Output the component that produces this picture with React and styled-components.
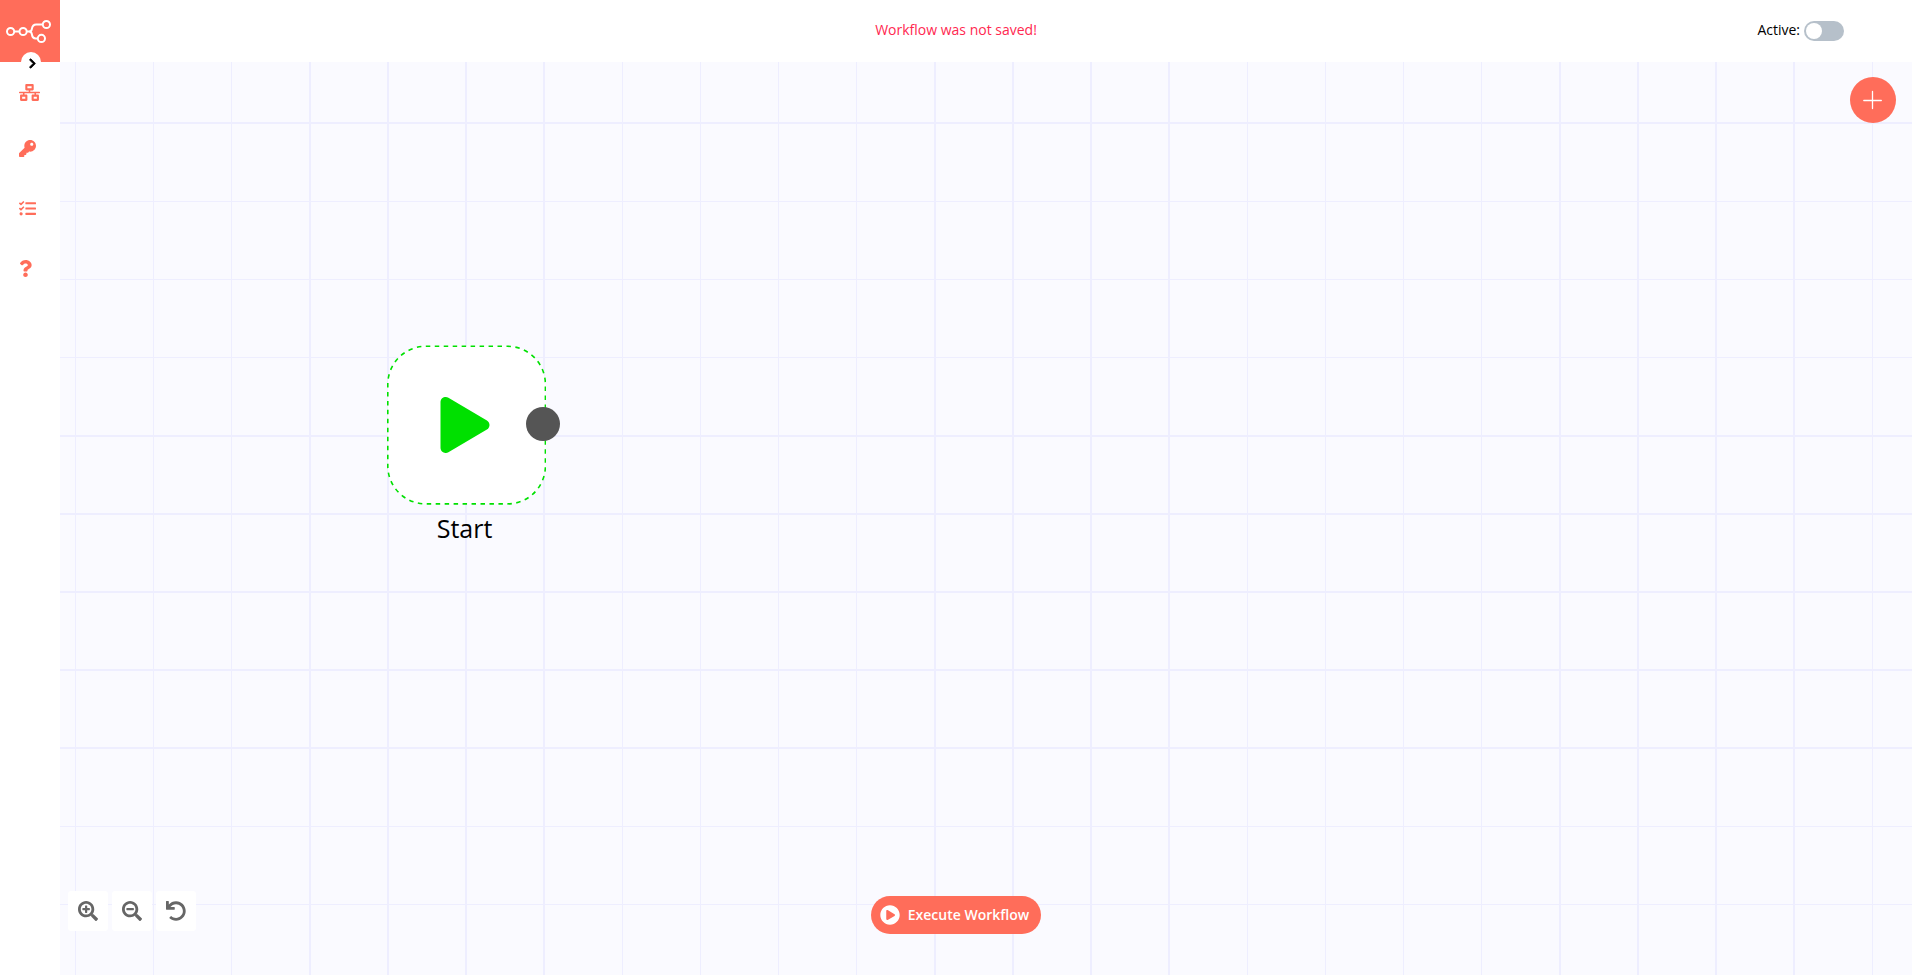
import React from "react";
import styled, { createGlobalStyle } from "styled-components";
import {
  FaNetworkWired,
  FaKey,
  FaTasks,
  FaQuestion,
  FaSearchPlus,
  FaSearchMinus,
  FaUndo,
  FaPlay,
  FaPlayCircle,
  FaChevronRight,
} from "react-icons/fa";

const brand = "#ff6d5a";

// One repeat of the canvas grid: eight lines over 625px, as [start, thickness].
const columns = [[0, 2], [78, 2], [156, 2], [234, 2], [313, 1], [391, 1], [469, 1], [547, 1]];
const rows = [[0, 2], [79, 1], [157, 1], [235, 1], [313, 2], [391, 2], [469, 2], [547, 2]];

const gridLines = (direction, lines) =>
  `linear-gradient(${direction}, ${lines
    .map(([at, size]) => `transparent ${at}px, #eeeeff ${at}px ${at + size}px, transparent ${at + size}px`)
    .join(", ")})`;

const GlobalStyle = createGlobalStyle`
  *, *::before, *::after { box-sizing: border-box; }
  body {
    margin: 0;
    background: #fff;
    color: #000;
    font: 14px/20px "Open Sans", "Noto Sans", sans-serif;
  }
  button { font: inherit; border: 0; padding: 0; cursor: pointer; }
  svg { display: block; }
`;

const Page = styled.div`
  display: grid;
  grid-template-columns: 60px 1fr;
  min-height: 100vh;
`;

const Sidebar = styled.aside`
  position: relative;
  background: #fff;
`;

const LogoLink = styled.a`
  display: flex;
  align-items: center;
  justify-content: center;
  height: 62px;
  background: ${brand};
`;

const ExpandButton = styled.button`
  position: absolute;
  top: 52px;
  left: 21px;
  display: grid;
  place-items: center;
  width: 20px;
  height: 20px;
  border-radius: 50%;
  background: #fff;
  color: #000;
  && { padding: 2px 0 0 2px; }
  svg { stroke: currentColor; stroke-width: 36; overflow: visible; }
`;

const Menu = styled.nav`
  display: flex;
  flex-direction: column;
  padding-top: 2px;
`;

const MenuItem = styled.a`
  display: flex;
  align-items: center;
  height: 56px;
  padding-left: 19px;
  color: ${brand};
  margin-top: ${({ $spaced }) => ($spaced ? "4px" : "0")};
  svg {
    width: ${({ $iconWidth }) => $iconWidth}px;
    height: 17px;
  }
`;

const Main = styled.div`
  display: flex;
  flex-direction: column;
  min-width: 0;
`;

const Header = styled.header`
  display: grid;
  grid-template-columns: 1fr auto 1fr;
  align-items: center;
  height: 62px;
  padding: 0 68px 2px 8px;
  background: #fff;
`;

const SaveStatus = styled.span`
  grid-column: 2;
  color: #ff2850;
`;

const ActiveLabel = styled.label`
  display: flex;
  align-items: center;
  justify-self: end;
  gap: 4px;
`;

const Switch = styled.input`
  appearance: none;
  width: 40px;
  height: 20px;
  margin: 2px 0 0;
  padding: 2px;
  border-radius: 10px;
  background: #b6c0ca;
  &::before {
    content: "";
    display: block;
    width: 16px;
    height: 16px;
    border-radius: 50%;
    background: #fff;
  }
  &:checked { background: ${brand}; }
  &:checked::before { margin-left: 20px; }
`;

const Canvas = styled.main`
  position: relative;
  flex: 1;
  display: flex;
  flex-direction: column;
  justify-content: space-between;
  overflow: hidden;
  background-color: #fafaff;
  background-image: ${gridLines("to right", columns)}, ${gridLines("to bottom", rows)};
  background-size: 625px 625px;
  background-position: 249px 60px;
`;

const Node = styled.div`
  position: absolute;
  top: 283px;
  left: 327px;
  width: 159px;
  text-align: center;
`;

const NodeBox = styled.div`
  position: relative;
  display: grid;
  place-items: center;
  height: 160px;
  padding-right: 4px;
  color: #00e000;
`;

const NodeOutline = styled.svg`
  position: absolute;
  top: 0;
  left: 0;
`;

const PlayIcon = styled(FaPlay)`
  position: relative;
  width: 56px;
  height: 56px;
`;

const Endpoint = styled.span`
  position: absolute;
  top: 62px;
  right: -14px;
  width: 34px;
  height: 34px;
  border-radius: 50%;
  background: #555;
`;

const NodeName = styled.div`
  padding: 6px 4px 0 0;
  font-size: 25px;
  line-height: 34px;
`;

const AddButton = styled.button`
  align-self: flex-end;
  display: grid;
  place-items: center;
  width: 46px;
  height: 46px;
  margin: 15px 16px 0 0;
  border-radius: 50%;
  background: ${brand};
  color: #fff;
`;

const Footer = styled.div`
  display: grid;
  grid-template-columns: 1fr auto 1fr;
  align-items: end;
  padding: 0 68px 41px 8px;
`;

const ZoomControls = styled.div`
  display: flex;
  gap: 4px;
  padding-bottom: 3px;
`;

const ZoomButton = styled.button`
  display: grid;
  place-items: center;
  width: 40px;
  height: 40px;
  border-radius: 3px;
  background: #fff;
  color: #666;
`;

const ExecuteButton = styled.button`
  display: flex;
  align-items: center;
  gap: 8px;
  height: 38px;
  border-radius: 19px;
  background: ${brand};
  color: #fff;
  && {
    padding: 0 12px 0 9px;
    font-weight: 600;
  }
`;

const Logo = () => (
  <svg width="48" height="26" viewBox="6 18 48 26" fill="none" stroke="#fff" strokeWidth="2">
    <circle cx="10.6" cy="31.5" r="3.6" />
    <circle cx="23.1" cy="31.5" r="3.6" />
    <circle cx="46.4" cy="24.5" r="3.6" />
    <circle cx="41.4" cy="38.4" r="3.6" />
    <path d="M14.2 31.5h5.3M26.7 31.5h2.5c2 0 2.4-1.1 2.6-2.4.5-2.9 1.4-4.6 4.4-4.6h6.6" />
    <path d="M29.2 31.5c2 0 2.4 1.2 2.6 2.5.4 2.7 1.3 4.4 3.8 4.4h2.2" />
  </svg>
);

const menu = [
  { label: "Workflows", Icon: FaNetworkWired, width: 21 },
  { label: "Credentials", Icon: FaKey, width: 17 },
  { label: "Executions", Icon: FaTasks, width: 17, spaced: true },
  { label: "Help", Icon: FaQuestion, width: 13, spaced: true },
];

const zoomActions = [
  { label: "Zoom in", Icon: FaSearchPlus },
  { label: "Zoom out", Icon: FaSearchMinus },
  { label: "Reset zoom", Icon: FaUndo },
];

export default function App() {
  return (
    <>
      <GlobalStyle />
      <Page>
        <Sidebar>
          <LogoLink href="#" aria-label="Home">
            <Logo />
          </LogoLink>
          <ExpandButton aria-label="Expand menu">
            <FaChevronRight size={11} />
          </ExpandButton>
          <Menu>
            {menu.map(({ label, Icon, width, spaced }) => (
              <MenuItem key={label} href="#" aria-label={label} $iconWidth={width} $spaced={spaced}>
                <Icon />
              </MenuItem>
            ))}
          </Menu>
        </Sidebar>
        <Main>
          <Header>
            <SaveStatus>Workflow was not saved!</SaveStatus>
            <ActiveLabel>
              Active:
              <Switch type="checkbox" role="switch" />
            </ActiveLabel>
          </Header>
          <Canvas>
            <Node>
              <NodeBox>
                <NodeOutline width="159" height="160" viewBox="0 0 159 160" aria-hidden="true">
                  <rect
                    x="0.8"
                    y="1.3"
                    width="157.6"
                    height="157.6"
                    rx="38"
                    fill="#fff"
                    stroke="currentColor"
                    strokeWidth="1.6"
                    pathLength="567"
                    strokeDasharray="4.5 4.5"
                  />
                </NodeOutline>
                <PlayIcon />
                <Endpoint />
              </NodeBox>
              <NodeName>Start</NodeName>
            </Node>
            <AddButton aria-label="Add node">
              <svg width="20" height="20" viewBox="0 0 20 20" stroke="currentColor" strokeWidth="1.3" strokeLinecap="round">
                <path d="M9.5 1.5v17M0.8 10.5h17.5" />
              </svg>
            </AddButton>
            <Footer>
              <ZoomControls>
                {zoomActions.map(({ label, Icon }) => (
                  <ZoomButton key={label} aria-label={label}>
                    <Icon size={20} />
                  </ZoomButton>
                ))}
              </ZoomControls>
              <ExecuteButton>
                <FaPlayCircle size={20} />
                Execute Workflow
              </ExecuteButton>
            </Footer>
          </Canvas>
        </Main>
      </Page>
    </>
  );
}
